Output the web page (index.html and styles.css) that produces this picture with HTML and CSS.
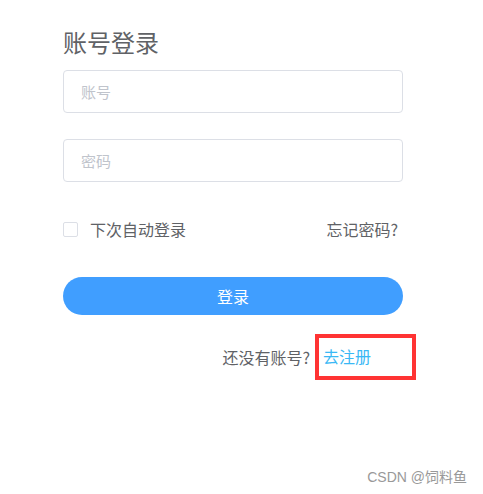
FILE: index.html
```html
<!DOCTYPE html>
<html lang="zh">
<head>
<meta charset="utf-8">
<link rel="stylesheet" href="styles.css">
</head>
<body>
<div class="page">
  <form class="login">
    <h1 class="title">账号登录</h1>
    <div class="field"><input class="input" type="text" placeholder="账号"></div>
    <div class="field field-pw"><input class="input" type="password" placeholder="密码"></div>
    <div class="options">
      <label class="remember"><span class="checkbox"></span><span>下次自动登录</span></label>
      <a class="forgot">忘记密码?</a>
    </div>
    <button class="btn" type="button">登录</button>
    <div class="register">
      <span class="no-account">还没有账号?</span>
      <span class="mark"><a class="link">去注册</a></span>
    </div>
  </form>
  <div class="watermark">CSDN @饲料鱼</div>
</div>
</body>
</html>
```
FILE: styles.css
```css
* { box-sizing: border-box; }
html, body { margin: 0; padding: 0; background: #fff; }
body {
  font-family: "Microsoft YaHei", "Noto Sans CJK SC", "Liberation Sans", sans-serif;
  width: 483px;
  height: 494px;
  overflow: hidden;
}
.page {
  position: relative;
  width: 483px;
  height: 494px;
  padding: 28px 0 0 63px;
}
.login {
  width: 340px;
  display: flex;
  flex-direction: column;
}
.title {
  margin: 0;
  font-size: 24px;
  font-weight: normal;
  color: #606266;
  line-height: 28px;
  height: 42px;
}
.field { height: 43px; }
.field-pw { margin-top: 26px; }
.input {
  display: block;
  width: 100%;
  height: 43px;
  border: 1px solid #dcdfe6;
  border-radius: 4px;
  padding: 0 17px;
  font-family: inherit;
  font-size: 15px;
  color: #606266;
  outline: none;
}
.input::placeholder { color: #c0c4cc; }
.options {
  margin-top: 36px;
  display: flex;
  justify-content: space-between;
  align-items: center;
  padding-right: 5px;
  height: 22px;
  font-size: 16px;
  color: #606266;
}
.remember { display: flex; align-items: center; gap: 12px; }
.checkbox {
  width: 15px;
  height: 15px;
  border: 1px solid #dcdfe6;
  border-radius: 2px;
  background: #fff;
}
.forgot { color: #606266; }
.btn {
  margin-top: 37px;
  height: 38px;
  width: 100%;
  border: none;
  border-radius: 19px;
  background: #409eff;
  color: #fff;
  font-family: inherit;
  font-size: 16px;
  padding: 0;
}
.register {
  margin-top: 19px;
  display: flex;
  justify-content: flex-end;
  align-items: center;
  font-size: 16px;
  color: #606266;
  margin-right: -13px;
}
.no-account { margin-right: 5px; }
.mark {
  display: block;
  width: 101px;
  height: 46px;
  border: 4px solid #ff3333;
  padding: 6px 0 0 4px;
}
.link { color: #3ab8f5; }
.watermark {
  position: absolute;
  right: 16px;
  bottom: 8px;
  font-size: 14px;
  color: #999;
  font-family: "Liberation Sans", "Noto Sans CJK SC", sans-serif;
}
```
